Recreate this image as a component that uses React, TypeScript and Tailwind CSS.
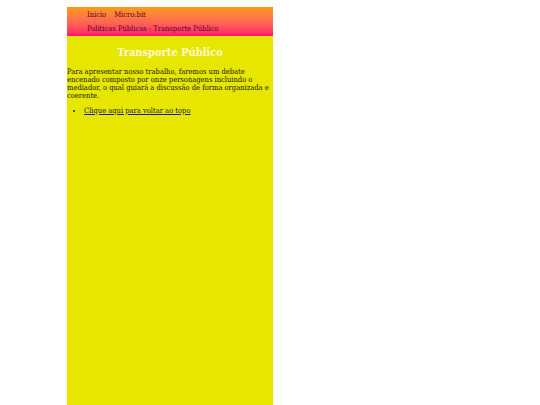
export default function App() {
  return (
    <div className="min-h-screen bg-white pt-[7px]" style={{ fontFamily: '"DejaVu Serif Condensed", "DejaVu Serif", serif' }}>
      <div className="ml-[67px] w-[206px] min-h-[398px] bg-[#e6e600]">
        <div className="h-[29px] bg-gradient-to-b from-[#ff9a00] to-[#ff0a6a] pl-[20px] pt-[1px] text-[7.5px] leading-[14px] text-[#5a0030]">
          <div className="flex gap-[8px]">
            <span>Inicio</span>
            <span>Micro:bit</span>
          </div>
          <div>Políticas Públicas - Transporte Público</div>
        </div>
        <h1 className="mt-[9px] text-center text-[11px] font-bold leading-[16px] text-[#fffbd0]">Transporte Público</h1>
        <p className="mt-[7px] text-[7.5px] leading-[8px] text-[#1a1a00]">
          Para apresentar nosso trabalho, faremos um debate encenado composto por onze personagens incluindo o mediador, o qual guiará a discussão de forma organizada e coerente.
        </p>
        <ul className="mt-[7px] list-disc pl-[17px] text-[7.5px] leading-[8px] text-[#222]">
          <li>
            <a className="underline">Clique aqui para voltar ao topo</a>
          </li>
        </ul>
      </div>
    </div>
  );
}
